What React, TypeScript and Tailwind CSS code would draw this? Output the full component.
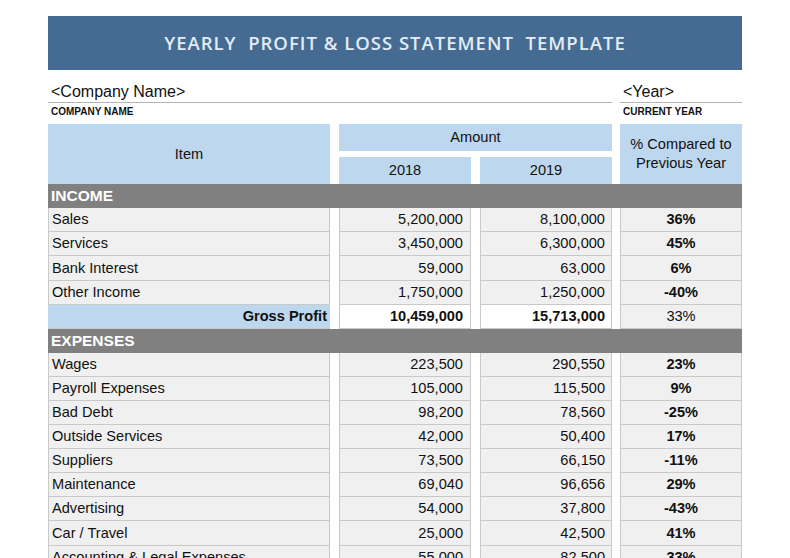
import React from 'react'

type Row = { label: string; y2018: string; y2019: string; pct: string; h?: number }

const income: Row[] = [
  { label: 'Sales', y2018: '5,200,000', y2019: '8,100,000', pct: '36%' },
  { label: 'Services', y2018: '3,450,000', y2019: '6,300,000', pct: '45%' },
  { label: 'Bank Interest', y2018: '59,000', y2019: '63,000', pct: '6%', h: 25 },
  { label: 'Other Income', y2018: '1,750,000', y2019: '1,250,000', pct: '-40%' },
]

const expenses: Row[] = [
  { label: 'Wages', y2018: '223,500', y2019: '290,550', pct: '23%' },
  { label: 'Payroll Expenses', y2018: '105,000', y2019: '115,500', pct: '9%' },
  { label: 'Bad Debt', y2018: '98,200', y2019: '78,560', pct: '-25%' },
  { label: 'Outside Services', y2018: '42,000', y2019: '50,400', pct: '17%' },
  { label: 'Suppliers', y2018: '73,500', y2019: '66,150', pct: '-11%' },
  { label: 'Maintenance', y2018: '69,040', y2019: '96,656', pct: '29%' },
  { label: 'Advertising', y2018: '54,000', y2019: '37,800', pct: '-43%' },
  { label: 'Car / Travel', y2018: '25,000', y2019: '42,500', pct: '41%', h: 25 },
  { label: 'Accounting & Legal Expenses', y2018: '55,000', y2019: '82,500', pct: '33%' },
]

const cell = 'h-full border-x border-b border-[#c9c9c9] bg-[#f0f0f0] flex items-center pt-[1px]'

function DataRow({ row }: { row: Row }) {
  return (
    <div className="flex" style={{ height: row.h ?? 24 }}>
      <div className={`${cell} w-[282px] pl-[3px]`}>{row.label}</div>
      <div className={`${cell} ml-[9px] w-[132px] justify-end pr-[7px]`}>{row.y2018}</div>
      <div className={`${cell} ml-[9px] w-[132px] justify-end pr-[6px]`}>{row.y2019}</div>
      <div className={`${cell} ml-[8px] w-[122px] justify-center font-bold`}>{row.pct}</div>
    </div>
  )
}

function Band({ title }: { title: string }) {
  return (
    <div className="flex h-[24px] items-center bg-[#808080] pl-[3px] text-[15.5px] font-bold text-white">
      {title}
    </div>
  )
}

export default function App() {
  return (
    <div className="h-[558px] overflow-hidden bg-white font-['Liberation_Sans',Arial,sans-serif] text-[14.6px] text-[#111]">
      <div className="ml-[48px] w-[694px] pt-[16px]">
        {/* Title banner */}
        <div className="flex h-[54px] items-center justify-center bg-[#456b92]">
          <h1 className="font-['Open_Sans',sans-serif] text-[18.5px] font-semibold tracking-[1px] whitespace-pre text-[#e3ecf5]">
            {'YEARLY  PROFIT & LOSS STATEMENT  TEMPLATE'}
          </h1>
        </div>

        {/* Company / year */}
        <div className="mt-[12px] flex">
          <div className="w-[564px]">
            <div className="h-[21px] border-b border-[#b4b4b4] pl-[3px] text-[16px] leading-[20px]">&lt;Company Name&gt;</div>
            <div className="h-[21px] pl-[3px] pt-[2px] text-[10px] font-bold leading-[14px]">COMPANY NAME</div>
          </div>
          <div className="ml-[8px] w-[122px]">
            <div className="h-[21px] border-b border-[#b4b4b4] pl-[3px] text-[16px] leading-[20px]">&lt;Year&gt;</div>
            <div className="h-[21px] pl-[3px] pt-[2px] text-[10px] font-bold leading-[14px]">CURRENT YEAR</div>
          </div>
        </div>

        {/* Header */}
        <div className="flex h-[60px]">
          <div className="flex w-[282px] items-center justify-center bg-[#bdd7ee] pt-[1px]">Item</div>
          <div className="ml-[9px] flex w-[273px] flex-col">
            <div className="flex h-[27px] items-center justify-center bg-[#bdd7ee]">Amount</div>
            <div className="mt-[6px] flex h-[27px]">
              <div className="flex w-[132px] items-center justify-center bg-[#bdd7ee] pt-[1px]">2018</div>
              <div className="ml-[9px] flex w-[132px] items-center justify-center bg-[#bdd7ee] pt-[1px]">2019</div>
            </div>
          </div>
          <div className="ml-[8px] flex w-[122px] items-start justify-center bg-[#bdd7ee] pt-[11px] text-center leading-[19px]">
            % Compared to
            <br />
            Previous Year
          </div>
        </div>

        <Band title="INCOME" />
        {income.map((r) => (
          <DataRow key={r.label} row={r} />
        ))}

        {/* Gross profit */}
        <div className="flex h-[24px] font-bold">
          <div className="flex h-full w-[282px] items-center justify-end border-b border-[#c9c9c9] bg-[#bdd7ee] pr-[3px] pt-[1px]">
            Gross Profit
          </div>
          <div className="ml-[9px] flex h-full w-[132px] items-center justify-end border-x border-b border-[#c9c9c9] bg-white pr-[7px] pt-[1px]">
            10,459,000
          </div>
          <div className="ml-[9px] flex h-full w-[132px] items-center justify-end border-x border-b border-[#c9c9c9] bg-white pr-[6px] pt-[1px]">
            15,713,000
          </div>
          <div className="ml-[8px] flex h-full w-[122px] items-center justify-center border-x border-b border-[#c9c9c9] bg-[#f0f0f0] pt-[1px] font-normal">
            33%
          </div>
        </div>

        <Band title="EXPENSES" />
        {expenses.map((r) => (
          <DataRow key={r.label} row={r} />
        ))}
      </div>
    </div>
  )
}
